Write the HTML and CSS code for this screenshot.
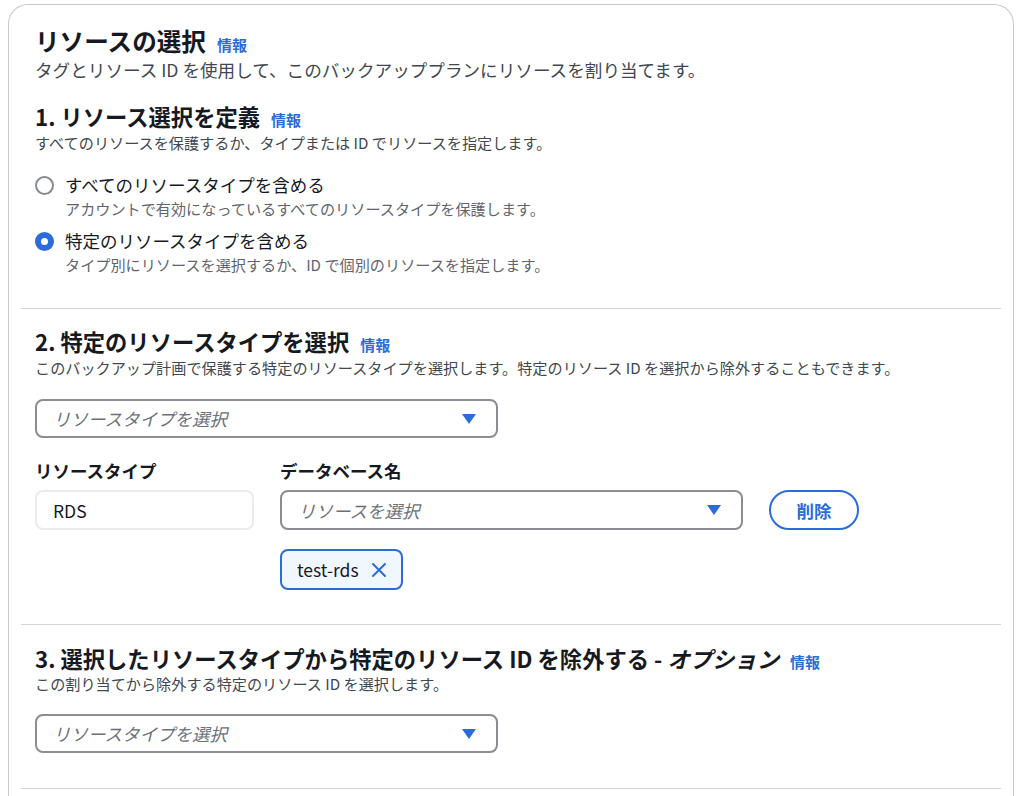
FILE: index.html
```html
<!DOCTYPE html>
<html lang="ja">
<head>
<meta charset="utf-8">
<title>リソースの選択</title>
<link rel="stylesheet" href="styles.css">
</head>
<body>
<div class="card">
  <div class="header">
    <h1 class="title"><span>リソースの選択</span><a class="info" href="#">情報</a></h1>
    <p class="subtitle">タグとリソース ID を使用して、このバックアッププランにリソースを割り当てます。</p>
  </div>

  <section class="section s1">
    <h2 class="heading"><span>1. リソース選択を定義</span><a class="info" href="#">情報</a></h2>
    <p class="desc">すべてのリソースを保護するか、タイプまたは ID でリソースを指定します。</p>
    <div class="radios">
      <div class="radio">
        <span class="dot"></span>
        <div class="rtext">
          <div class="rlabel">すべてのリソースタイプを含める</div>
          <div class="rdesc">アカウントで有効になっているすべてのリソースタイプを保護します。</div>
        </div>
      </div>
      <div class="radio">
        <span class="dot checked"></span>
        <div class="rtext">
          <div class="rlabel">特定のリソースタイプを含める</div>
          <div class="rdesc">タイプ別にリソースを選択するか、ID で個別のリソースを指定します。</div>
        </div>
      </div>
    </div>
  </section>

  <section class="section s2">
    <h2 class="heading"><span>2. 特定のリソースタイプを選択</span><a class="info" href="#">情報</a></h2>
    <p class="desc">このバックアップ計画で保護する特定のリソースタイプを選択します。特定のリソース ID を選択から除外することもできます。</p>
    <div class="select wide"><span class="ph">リソースタイプを選択</span><span class="caret"></span></div>
    <div class="grid">
      <div class="flabel">リソースタイプ</div>
      <div class="flabel">データベース名</div>
      <div></div>
      <div class="input">RDS</div>
      <div class="select"><span class="ph">リソースを選択</span><span class="caret"></span></div>
      <button class="btn">削除</button>
      <div></div>
      <div class="tokencell">
        <span class="token">test-rds
          <svg class="x" width="16" height="16" viewBox="0 0 16 16"><path d="M2 2 L14 14 M14 2 L2 14" stroke="#2b6cd9" stroke-width="2" stroke-linecap="round" fill="none"/></svg>
        </span>
      </div>
    </div>
  </section>

  <section class="section s3">
    <h2 class="heading"><span>3. 選択したリソースタイプから特定のリソース ID を除外する - <em>オプション</em></span><a class="info" href="#">情報</a></h2>
    <p class="desc">この割り当てから除外する特定のリソース ID を選択します。</p>
    <div class="select wide"><span class="ph">リソースタイプを選択</span><span class="caret"></span></div>
  </section>
</div>
</body>
</html>
```

FILE: styles.css
```css
* { box-sizing: border-box; }
html, body { margin: 0; padding: 0; background: #fff; }
body {
  padding: 4px 10px 0 8px;
  font-family: "Noto Sans CJK JP", "Noto Sans", sans-serif;
  color: #16191f;
}
.card {
  width: 1006px;
  border: 1px solid #c8c8cf;
  border-bottom: none;
  border-radius: 20px 20px 0 0;
  padding: 0 12px;
  min-height: 800px;
}
.header { padding: 20px 14px 0; }
.title, .heading {
  margin: 0;
  display: flex;
  align-items: baseline;
  gap: 11px;
  font-weight: 700;
  color: #16191f;
}
.title { font-size: 24.6px; line-height: 30px; margin-bottom: 2px; }
.heading { font-size: 22.3px; line-height: 28px; margin-bottom: 1px; }
.s3 .heading { margin-bottom: 0; }
.heading em { font-style: italic; }
.info {
  font-size: 15px;
  line-height: 1;
  font-weight: 700;
  color: #2b6cd9;
  text-decoration: none;
}
.subtitle {
  margin: 0;
  font-size: 17.6px;
  line-height: 26px;
  color: #414750;
}
.section { padding: 0 14px; border-bottom: 1px solid #d5d5da; }
.s1 { padding-top: 19px; padding-bottom: 33px; }
.s2 { padding-top: 18px; padding-bottom: 34px; }
.s3 { padding-top: 19px; padding-bottom: 35px; }
.desc {
  margin: 0;
  font-size: 15.15px;
  line-height: 22px;
  color: #414750;
}
.radios { margin-top: 20px; display: flex; flex-direction: column; gap: 10px; }
.radio { display: flex; gap: 11px; }
.dot {
  flex: none;
  width: 19px; height: 19px;
  margin-top: 3px;
  border-radius: 50%;
  border: 2px solid #868a93;
  background: #fff;
}
.dot.checked {
  border: 6px solid #2b6cd9;
}
.rlabel { font-size: 17.5px; line-height: 24px; color: #16191f; }
.rdesc { font-size: 15.15px; line-height: 22px; color: #5f6570; }
.select {
  height: 39px;
  border: 2px solid #8c8c94;
  border-radius: 8px;
  display: flex;
  align-items: center;
  justify-content: space-between;
  padding: 0 20px 0 16px;
  background: #fff;
}
.select.wide { width: 463px; margin-top: 21px; }
.s3 .select.wide { margin-top: 20px; }
.ph { font-size: 17.5px; font-style: italic; color: #6b707a; }
.caret {
  width: 0; height: 0;
  border-left: 7px solid transparent;
  border-right: 7px solid transparent;
  border-top: 10px solid #2b6cd9;
}
.grid {
  margin-top: 21px;
  display: grid;
  grid-template-columns: 219px 463px 90px;
  column-gap: 26px;
}
.flabel { font-size: 17.5px; line-height: 24px; font-weight: 700; margin-bottom: 7px; }
.input {
  height: 40px;
  border: 2px solid #e9ebee;
  border-radius: 8px;
  padding: 0 16px;
  display: flex;
  align-items: center;
  font-size: 17.5px;
  color: #16191f;
}
.grid .select { height: 40px; }
.btn {
  height: 40px;
  border: 2px solid #2b6cd9;
  border-radius: 20px;
  background: #fff;
  color: #2b6cd9;
  font-family: inherit;
  font-size: 17.5px;
  font-weight: 700;
  padding: 0;
  cursor: pointer;
}
.tokencell { margin-top: 19px; }
.token {
  display: inline-flex;
  align-items: center;
  gap: 12px;
  height: 41px;
  border: 2px solid #2b6cd9;
  border-radius: 8px;
  background: #f1f7ff;
  padding: 0 14px 0 15px;
  font-size: 17.5px;
  color: #16191f;
}
.x { display: block; }
```
